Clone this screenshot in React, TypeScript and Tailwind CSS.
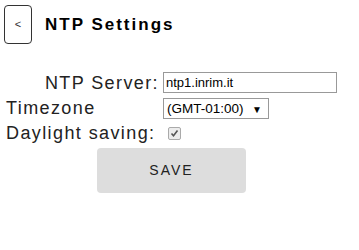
export default function App() {
  return (
    <div className="h-[250px] w-[359px] bg-white text-[#222] [font-family:'Liberation_Sans',Arial,sans-serif]">
      <div className="flex items-center pl-1 pt-[5px]">
        <button className="flex h-[39px] w-[28px] items-center justify-center rounded-[4px] border border-[#333] bg-white text-[11px] text-[#333]">
          &lt;
        </button>
        <h1 className="ml-[13px] text-[17px] font-bold tracking-[2px] text-black">NTP Settings</h1>
      </div>

      <div className="mt-[28px] grid grid-cols-[153px_1fr] items-center gap-x-[4px] pl-[6px] text-[18px] leading-[20px] tracking-[1.4px]">
        <label className="text-right">NTP Server:</label>
        <input
          defaultValue="ntp1.inrim.it"
          className="h-[21px] w-[174px] border border-[#999] px-[2px] text-[13px] tracking-normal text-black outline-none"
        />

        <label className="mt-[4px]">Timezone</label>
        <div className="relative mt-[4px] h-[21px] w-[106px]">
          <select className="h-full w-full appearance-none border border-[#999] bg-white pl-[3px] text-[13.5px] tracking-normal text-black outline-none">
            <option>(GMT-01:00)</option>
          </select>
          <span className="pointer-events-none absolute right-[7px] top-[3px] text-[10px] tracking-normal text-black">▼</span>
        </div>

        <label className="mt-[5px]">Daylight saving:</label>
        <div className="mt-[5px] flex items-center pl-[5px]">
          <span className="flex h-[13px] w-[13px] items-center justify-center rounded-[2px] border border-[#aaa] bg-[#ececec]">
            <svg width="9" height="9" viewBox="0 0 9 9">
              <path d="M1.5 4.5 L3.5 6.8 L7.5 1.5" fill="none" stroke="#555" strokeWidth="1.6" />
            </svg>
          </span>
        </div>
      </div>

      <div className="mt-[5px] pl-[97px]">
        <button className="h-[45px] w-[149px] rounded-[4px] bg-[#dddddd] text-[14px] tracking-[2px] text-[#222]">
          SAVE
        </button>
      </div>
    </div>
  );
}
